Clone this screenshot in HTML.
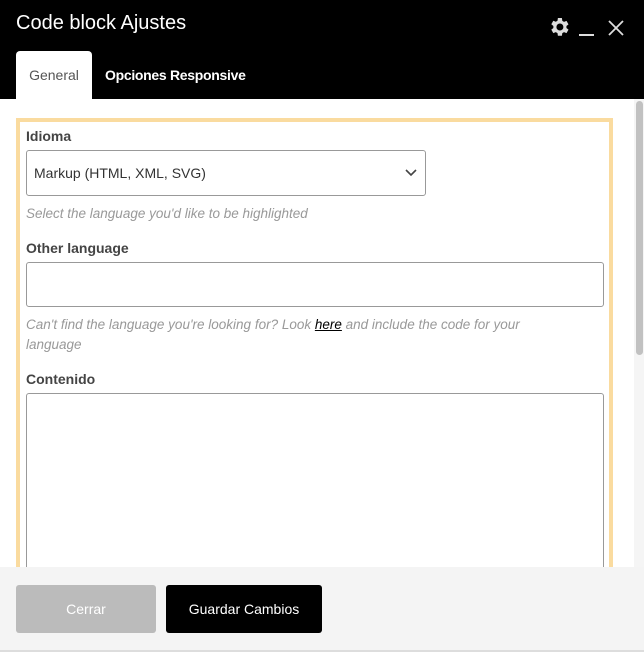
<!DOCTYPE html>
<html><head><style>
*{box-sizing:border-box;margin:0;padding:0}
body{width:644px;height:652px;overflow:hidden;background:#fff;font-family:"Liberation Sans",sans-serif;position:relative}
.hdr{position:absolute;left:0;top:0;width:644px;height:99px;background:#000}
.title{position:absolute;left:16px;top:12px;color:#fff;font-size:20px}
.tab{position:absolute;left:16px;top:51px;width:76px;height:48px;background:#fff;border-radius:4px 4px 0 0;color:#555;font-size:14px;text-align:center;line-height:48px}
.tab2{position:absolute;left:105px;top:51px;height:48px;line-height:48px;color:#fff;font-size:14px;font-weight:bold;letter-spacing:-0.3px}
.box{position:absolute;left:16px;top:118px;width:597px;height:460px;border:4px solid #fadb9f;border-bottom:none}
.lbl{position:absolute;left:26px;font-size:14px;font-weight:bold;color:#444}
.help{position:absolute;left:26px;font-size:13.5px;font-style:italic;color:#999;line-height:20px;width:545px}
.help a{color:#000;text-decoration:underline}
.inp{position:absolute;left:26px;border:1px solid #999;border-radius:3px;background:#fff}
.scroll{position:absolute;left:634px;top:99px;width:10px;height:468px;background:#f5f5f5}
.thumb{position:absolute;left:636px;top:101px;width:7px;height:254px;background:#c1c1c1;border-radius:4px}
.foot{position:absolute;left:0;top:567px;width:644px;height:85px;background:#f4f4f4;border-bottom:2px solid #ddd}
.btn{position:absolute;top:585px;height:48px;line-height:48px;text-align:center;font-size:14px;color:#fff;border-radius:3px}
</style></head><body>
<div class="hdr"></div>
<div class="title">Code block Ajustes</div>
<svg style="position:absolute;left:547px;top:15px" width="24" height="24" viewBox="0 0 24 24"><path fill="#ddd" d="M19.4 13a7.5 7.5 0 0 0 0-2l2.1-1.6-2-3.5-2.5 1a7.4 7.4 0 0 0-1.7-1L14.9 3h-4l-.4 2.7a7.4 7.4 0 0 0-1.7 1l-2.5-1-2 3.5L6.4 11a7.5 7.5 0 0 0 0 2l-2.1 1.6 2 3.5 2.5-1a7.4 7.4 0 0 0 1.7 1l.4 2.7h4l.4-2.7a7.4 7.4 0 0 0 1.7-1l2.5 1 2-3.5zM12.9 15.5a3.5 3.5 0 1 1 0-7 3.5 3.5 0 0 1 0 7z"/></svg>
<div style="position:absolute;left:579px;top:34px;width:15px;height:2px;background:#ddd"></div>
<svg style="position:absolute;left:607px;top:19px" width="18" height="18" viewBox="0 0 18 18"><path d="M2 2L16 16M16 2L2 16" stroke="#ddd" stroke-width="1.8"/></svg>
<div class="tab">General</div>
<div class="tab2">Opciones Responsive</div>
<div class="scroll"></div><div class="thumb"></div>
<div class="box"></div>
<div class="lbl" style="top:128px">Idioma</div>
<div class="inp" style="top:150px;width:400px;height:46px;font-size:14px;color:#333;padding:14px 0 0 7px">Markup (HTML, XML, SVG)
<svg style="position:absolute;right:8px;top:18px" width="12" height="8" viewBox="0 0 12 8"><path d="M1 1l5 5 5-5" stroke="#444" stroke-width="1.6" fill="none"/></svg></div>
<div class="help" style="top:204px">Select the language you'd like to be highlighted</div>
<div class="lbl" style="top:240px">Other language</div>
<div class="inp" style="top:262px;width:578px;height:45px"></div>
<div class="help" style="top:315px">Can't find the language you're looking for? Look <a>here</a> and include the code for your language</div>
<div class="lbl" style="top:371px">Contenido</div>
<div class="inp" style="top:393px;width:578px;height:200px"></div>
<div class="foot"></div>
<div class="btn" style="left:16px;width:140px;background:#bbb">Cerrar</div>
<div class="btn" style="left:166px;width:156px;background:#000">Guardar Cambios</div>
</body></html>
